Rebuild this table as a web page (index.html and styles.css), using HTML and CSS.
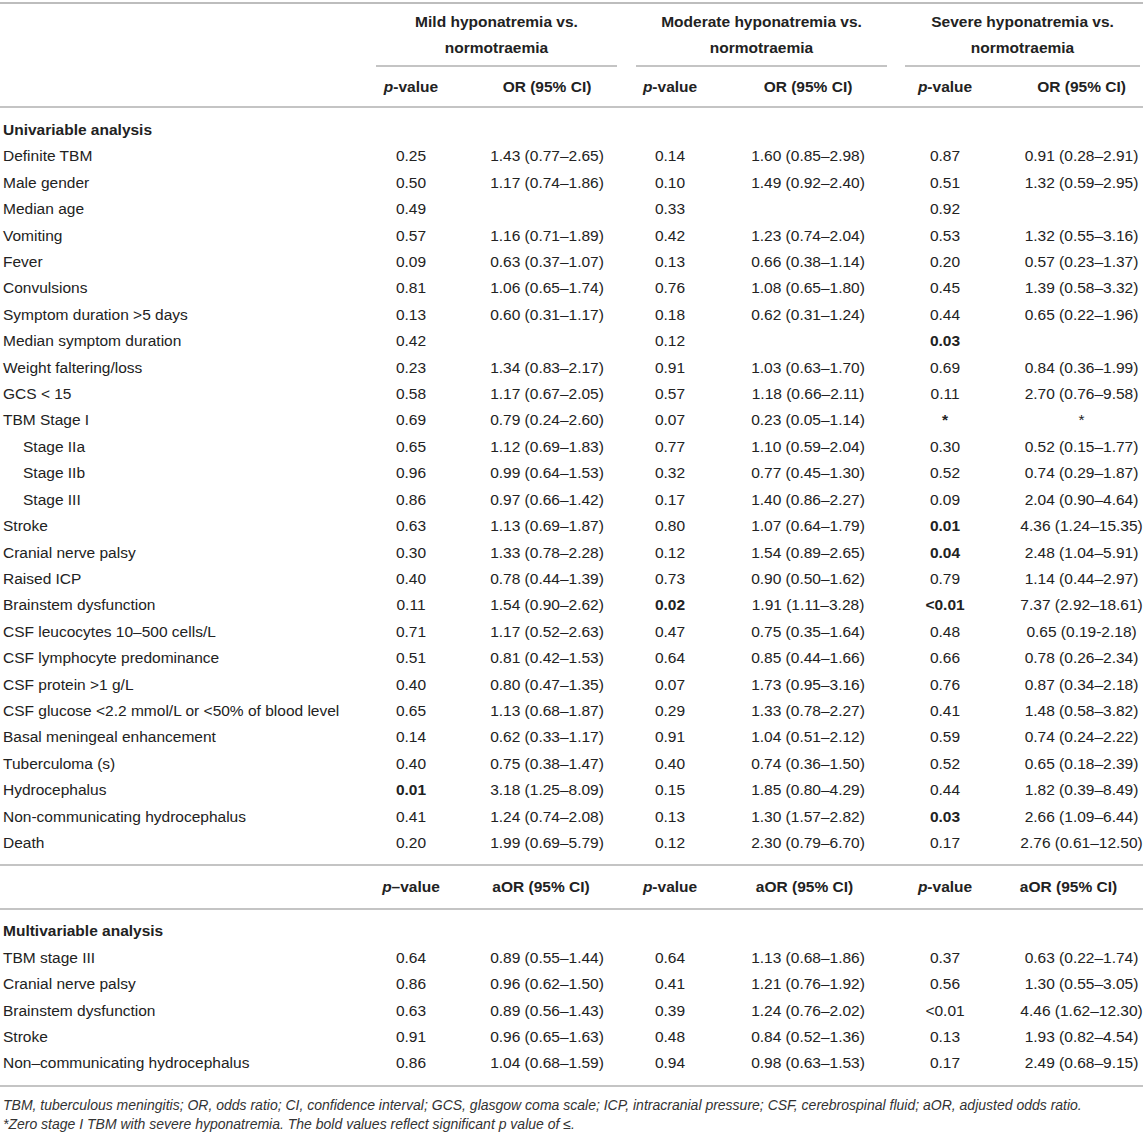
FILE: index.html
```html
<!DOCTYPE html>
<html lang="en">
<head>
  <meta charset="UTF-8">
  <title>Hyponatremia risk factors</title>
  <link rel="stylesheet" href="styles.css">
</head>
<body>
  <table class="results">
    <colgroup>
      <col class="c-label">
      <col class="c-p1"><col class="c-or1">
      <col class="c-p2"><col class="c-or2">
      <col class="c-p3"><col class="c-or3">
    </colgroup>
    <thead>
      <tr class="group-row">
        <th></th>
        <th colspan="2" class="g1"><div>Mild hyponatremia vs.<br>normotraemia</div></th>
        <th colspan="2" class="g2"><div>Moderate hyponatremia vs.<br>normotraemia</div></th>
        <th colspan="2" class="g3"><div>Severe hyponatremia vs.<br>normotraemia</div></th>
      </tr>
      <tr class="sub-row">
        <th></th>
        <th><i>p</i>-value</th><th class="or or1">OR (95% CI)</th>
        <th><i>p</i>-value</th><th class="or or2">OR (95% CI)</th>
        <th><i>p</i>-value</th><th class="or or3">OR (95% CI)</th>
      </tr>
    </thead>
    <tbody class="section">
      <tr class="section-title"><td colspan="7">Univariable analysis</td></tr>
      <tr><td>Definite TBM</td><td>0.25</td><td class="or or1">1.43 (0.77–2.65)</td><td>0.14</td><td class="or or2">1.60 (0.85–2.98)</td><td>0.87</td><td class="or or3">0.91 (0.28–2.91)</td></tr>
      <tr><td>Male gender</td><td>0.50</td><td class="or or1">1.17 (0.74–1.86)</td><td>0.10</td><td class="or or2">1.49 (0.92–2.40)</td><td>0.51</td><td class="or or3">1.32 (0.59–2.95)</td></tr>
      <tr><td>Median age</td><td>0.49</td><td class="or or1"></td><td>0.33</td><td class="or or2"></td><td>0.92</td><td class="or or3"></td></tr>
      <tr><td>Vomiting</td><td>0.57</td><td class="or or1">1.16 (0.71–1.89)</td><td>0.42</td><td class="or or2">1.23 (0.74–2.04)</td><td>0.53</td><td class="or or3">1.32 (0.55–3.16)</td></tr>
      <tr><td>Fever</td><td>0.09</td><td class="or or1">0.63 (0.37–1.07)</td><td>0.13</td><td class="or or2">0.66 (0.38–1.14)</td><td>0.20</td><td class="or or3">0.57 (0.23–1.37)</td></tr>
      <tr><td>Convulsions</td><td>0.81</td><td class="or or1">1.06 (0.65–1.74)</td><td>0.76</td><td class="or or2">1.08 (0.65–1.80)</td><td>0.45</td><td class="or or3">1.39 (0.58–3.32)</td></tr>
      <tr><td>Symptom duration &gt;5 days</td><td>0.13</td><td class="or or1">0.60 (0.31–1.17)</td><td>0.18</td><td class="or or2">0.62 (0.31–1.24)</td><td>0.44</td><td class="or or3">0.65 (0.22–1.96)</td></tr>
      <tr><td>Median symptom duration</td><td>0.42</td><td class="or or1"></td><td>0.12</td><td class="or or2"></td><td><b>0.03</b></td><td class="or or3"></td></tr>
      <tr><td>Weight faltering/loss</td><td>0.23</td><td class="or or1">1.34 (0.83–2.17)</td><td>0.91</td><td class="or or2">1.03 (0.63–1.70)</td><td>0.69</td><td class="or or3">0.84 (0.36–1.99)</td></tr>
      <tr><td>GCS &lt; 15</td><td>0.58</td><td class="or or1">1.17 (0.67–2.05)</td><td>0.57</td><td class="or or2">1.18 (0.66–2.11)</td><td>0.11</td><td class="or or3">2.70 (0.76–9.58)</td></tr>
      <tr><td>TBM Stage I</td><td>0.69</td><td class="or or1">0.79 (0.24–2.60)</td><td>0.07</td><td class="or or2">0.23 (0.05–1.14)</td><td><b>*</b></td><td class="or or3">*</td></tr>
      <tr><td class="sub">Stage IIa</td><td>0.65</td><td class="or or1">1.12 (0.69–1.83)</td><td>0.77</td><td class="or or2">1.10 (0.59–2.04)</td><td>0.30</td><td class="or or3">0.52 (0.15–1.77)</td></tr>
      <tr><td class="sub">Stage IIb</td><td>0.96</td><td class="or or1">0.99 (0.64–1.53)</td><td>0.32</td><td class="or or2">0.77 (0.45–1.30)</td><td>0.52</td><td class="or or3">0.74 (0.29–1.87)</td></tr>
      <tr><td class="sub">Stage III</td><td>0.86</td><td class="or or1">0.97 (0.66–1.42)</td><td>0.17</td><td class="or or2">1.40 (0.86–2.27)</td><td>0.09</td><td class="or or3">2.04 (0.90–4.64)</td></tr>
      <tr><td>Stroke</td><td>0.63</td><td class="or or1">1.13 (0.69–1.87)</td><td>0.80</td><td class="or or2">1.07 (0.64–1.79)</td><td><b>0.01</b></td><td class="or or3">4.36 (1.24–15.35)</td></tr>
      <tr><td>Cranial nerve palsy</td><td>0.30</td><td class="or or1">1.33 (0.78–2.28)</td><td>0.12</td><td class="or or2">1.54 (0.89–2.65)</td><td><b>0.04</b></td><td class="or or3">2.48 (1.04–5.91)</td></tr>
      <tr><td>Raised ICP</td><td>0.40</td><td class="or or1">0.78 (0.44–1.39)</td><td>0.73</td><td class="or or2">0.90 (0.50–1.62)</td><td>0.79</td><td class="or or3">1.14 (0.44–2.97)</td></tr>
      <tr><td>Brainstem dysfunction</td><td>0.11</td><td class="or or1">1.54 (0.90–2.62)</td><td><b>0.02</b></td><td class="or or2">1.91 (1.11–3.28)</td><td><b>&lt;0.01</b></td><td class="or or3">7.37 (2.92–18.61)</td></tr>
      <tr><td>CSF leucocytes 10–500 cells/L</td><td>0.71</td><td class="or or1">1.17 (0.52–2.63)</td><td>0.47</td><td class="or or2">0.75 (0.35–1.64)</td><td>0.48</td><td class="or or3">0.65 (0.19-2.18)</td></tr>
      <tr><td>CSF lymphocyte predominance</td><td>0.51</td><td class="or or1">0.81 (0.42–1.53)</td><td>0.64</td><td class="or or2">0.85 (0.44–1.66)</td><td>0.66</td><td class="or or3">0.78 (0.26–2.34)</td></tr>
      <tr><td>CSF protein &gt;1 g/L</td><td>0.40</td><td class="or or1">0.80 (0.47–1.35)</td><td>0.07</td><td class="or or2">1.73 (0.95–3.16)</td><td>0.76</td><td class="or or3">0.87 (0.34–2.18)</td></tr>
      <tr><td>CSF glucose &lt;2.2 mmol/L or &lt;50% of blood level</td><td>0.65</td><td class="or or1">1.13 (0.68–1.87)</td><td>0.29</td><td class="or or2">1.33 (0.78–2.27)</td><td>0.41</td><td class="or or3">1.48 (0.58–3.82)</td></tr>
      <tr><td>Basal meningeal enhancement</td><td>0.14</td><td class="or or1">0.62 (0.33–1.17)</td><td>0.91</td><td class="or or2">1.04 (0.51–2.12)</td><td>0.59</td><td class="or or3">0.74 (0.24–2.22)</td></tr>
      <tr><td>Tuberculoma (s)</td><td>0.40</td><td class="or or1">0.75 (0.38–1.47)</td><td>0.40</td><td class="or or2">0.74 (0.36–1.50)</td><td>0.52</td><td class="or or3">0.65 (0.18–2.39)</td></tr>
      <tr><td>Hydrocephalus</td><td><b>0.01</b></td><td class="or or1">3.18 (1.25–8.09)</td><td>0.15</td><td class="or or2">1.85 (0.80–4.29)</td><td>0.44</td><td class="or or3">1.82 (0.39–8.49)</td></tr>
      <tr><td>Non-communicating hydrocephalus</td><td>0.41</td><td class="or or1">1.24 (0.74–2.08)</td><td>0.13</td><td class="or or2">1.30 (1.57–2.82)</td><td><b>0.03</b></td><td class="or or3">2.66 (1.09–6.44)</td></tr>
      <tr class="last"><td>Death</td><td>0.20</td><td class="or or1">1.99 (0.69–5.79)</td><td>0.12</td><td class="or or2">2.30 (0.79–6.70)</td><td>0.17</td><td class="or or3">2.76 (0.61–12.50)</td></tr>
    </tbody>
    <tbody class="section">
      <tr class="sub-row mid">
        <th></th>
        <th><i>p</i>–value</th><th class="or or1">aOR (95% CI)</th>
        <th><i>p</i>-value</th><th class="or or2">aOR (95% CI)</th>
        <th><i>p</i>-value</th><th class="or or3">aOR (95% CI)</th>
      </tr>
      <tr class="section-title"><td colspan="7">Multivariable analysis</td></tr>
      <tr><td>TBM stage III</td><td>0.64</td><td class="or or1">0.89 (0.55–1.44)</td><td>0.64</td><td class="or or2">1.13 (0.68–1.86)</td><td>0.37</td><td class="or or3">0.63 (0.22–1.74)</td></tr>
      <tr><td>Cranial nerve palsy</td><td>0.86</td><td class="or or1">0.96 (0.62–1.50)</td><td>0.41</td><td class="or or2">1.21 (0.76–1.92)</td><td>0.56</td><td class="or or3">1.30 (0.55–3.05)</td></tr>
      <tr><td>Brainstem dysfunction</td><td>0.63</td><td class="or or1">0.89 (0.56–1.43)</td><td>0.39</td><td class="or or2">1.24 (0.76–2.02)</td><td>&lt;0.01</td><td class="or or3">4.46 (1.62–12.30)</td></tr>
      <tr><td>Stroke</td><td>0.91</td><td class="or or1">0.96 (0.65–1.63)</td><td>0.48</td><td class="or or2">0.84 (0.52–1.36)</td><td>0.13</td><td class="or or3">1.93 (0.82–4.54)</td></tr>
      <tr class="last"><td>Non–communicating hydrocephalus</td><td>0.86</td><td class="or or1">1.04 (0.68–1.59)</td><td>0.94</td><td class="or or2">0.98 (0.63–1.53)</td><td>0.17</td><td class="or or3">2.49 (0.68–9.15)</td></tr>
    </tbody>
  </table>
  <div class="notes">
    <p>TBM, tuberculous meningitis; OR, odds ratio; CI, confidence interval; GCS, glasgow coma scale; ICP, intracranial pressure; CSF, cerebrospinal fluid; aOR, adjusted odds ratio.</p>
    <p>*Zero stage I TBM with severe hyponatremia. The bold values reflect significant p value of ≤.</p>
  </div>
</body>
</html>
```
FILE: styles.css
```css
/* Table of hyponatremia outcomes */
body {
  margin: 0;
  padding: 2px 0 0 0;
  font-family: "Liberation Sans", Arial, sans-serif;
  color: #222;
  background: #fff;
}

.results {
  width: 1143px;
  border-collapse: collapse;
  table-layout: fixed;
  font-size: 15.5px;
  border-top: 2px solid #bdbdbd;
}

.c-label { width: 367px; }
.c-p1 { width: 88px; }
.c-or1 { width: 172px; }
.c-p2 { width: 86px; }
.c-or2 { width: 183px; }
.c-p3 { width: 98px; }
.c-or3 { width: 149px; }

.results th,
.results td {
  padding: 0;
  text-align: center;
  line-height: 26.4px;
  white-space: nowrap;
}

.results th {
  font-weight: bold;
}

.results td:first-child {
  text-align: left;
  padding-left: 3px;
}

.results td.sub {
  padding-left: 23px;
}

.results .or1 { padding-left: 12px; }
.results .or2 { padding-left: 7px; }
.results .or3 { padding-left: 26px; }

/* group headers with split underline */
.group-row th {
  padding-top: 5px;
  line-height: 26px;
}

.group-row th div {
  padding-bottom: 4px;
  border-bottom: 2px solid #c4c4c4;
}

.group-row .g1 div { margin: 0 10px 0 9px; }
.group-row .g2 div { margin: 0 9px; }
.group-row .g3 div { margin: 0 3px 0 9px; }

.sub-row th {
  line-height: 26px;
  padding: 6.5px 0;
  border-bottom: 2px solid #c4c4c4;
}

.sub-row.mid th {
  padding: 8px 0;
}

.sub-row th i {
  font-style: italic;
}

.section-title td {
  font-weight: bold;
  padding-top: 9px;
}

.results tbody + tbody .section-title td {
  padding-top: 8px;
}

.results tr.last td {
  padding-bottom: 8px;
  border-bottom: 2px solid #c4c4c4;
}

.notes {
  padding-top: 11px;
  font-size: 14px;
  font-style: italic;
  color: #333;
}

.notes p {
  margin: 0 0 5px 0;
  padding-left: 3px;
  line-height: 14px;
}
```
